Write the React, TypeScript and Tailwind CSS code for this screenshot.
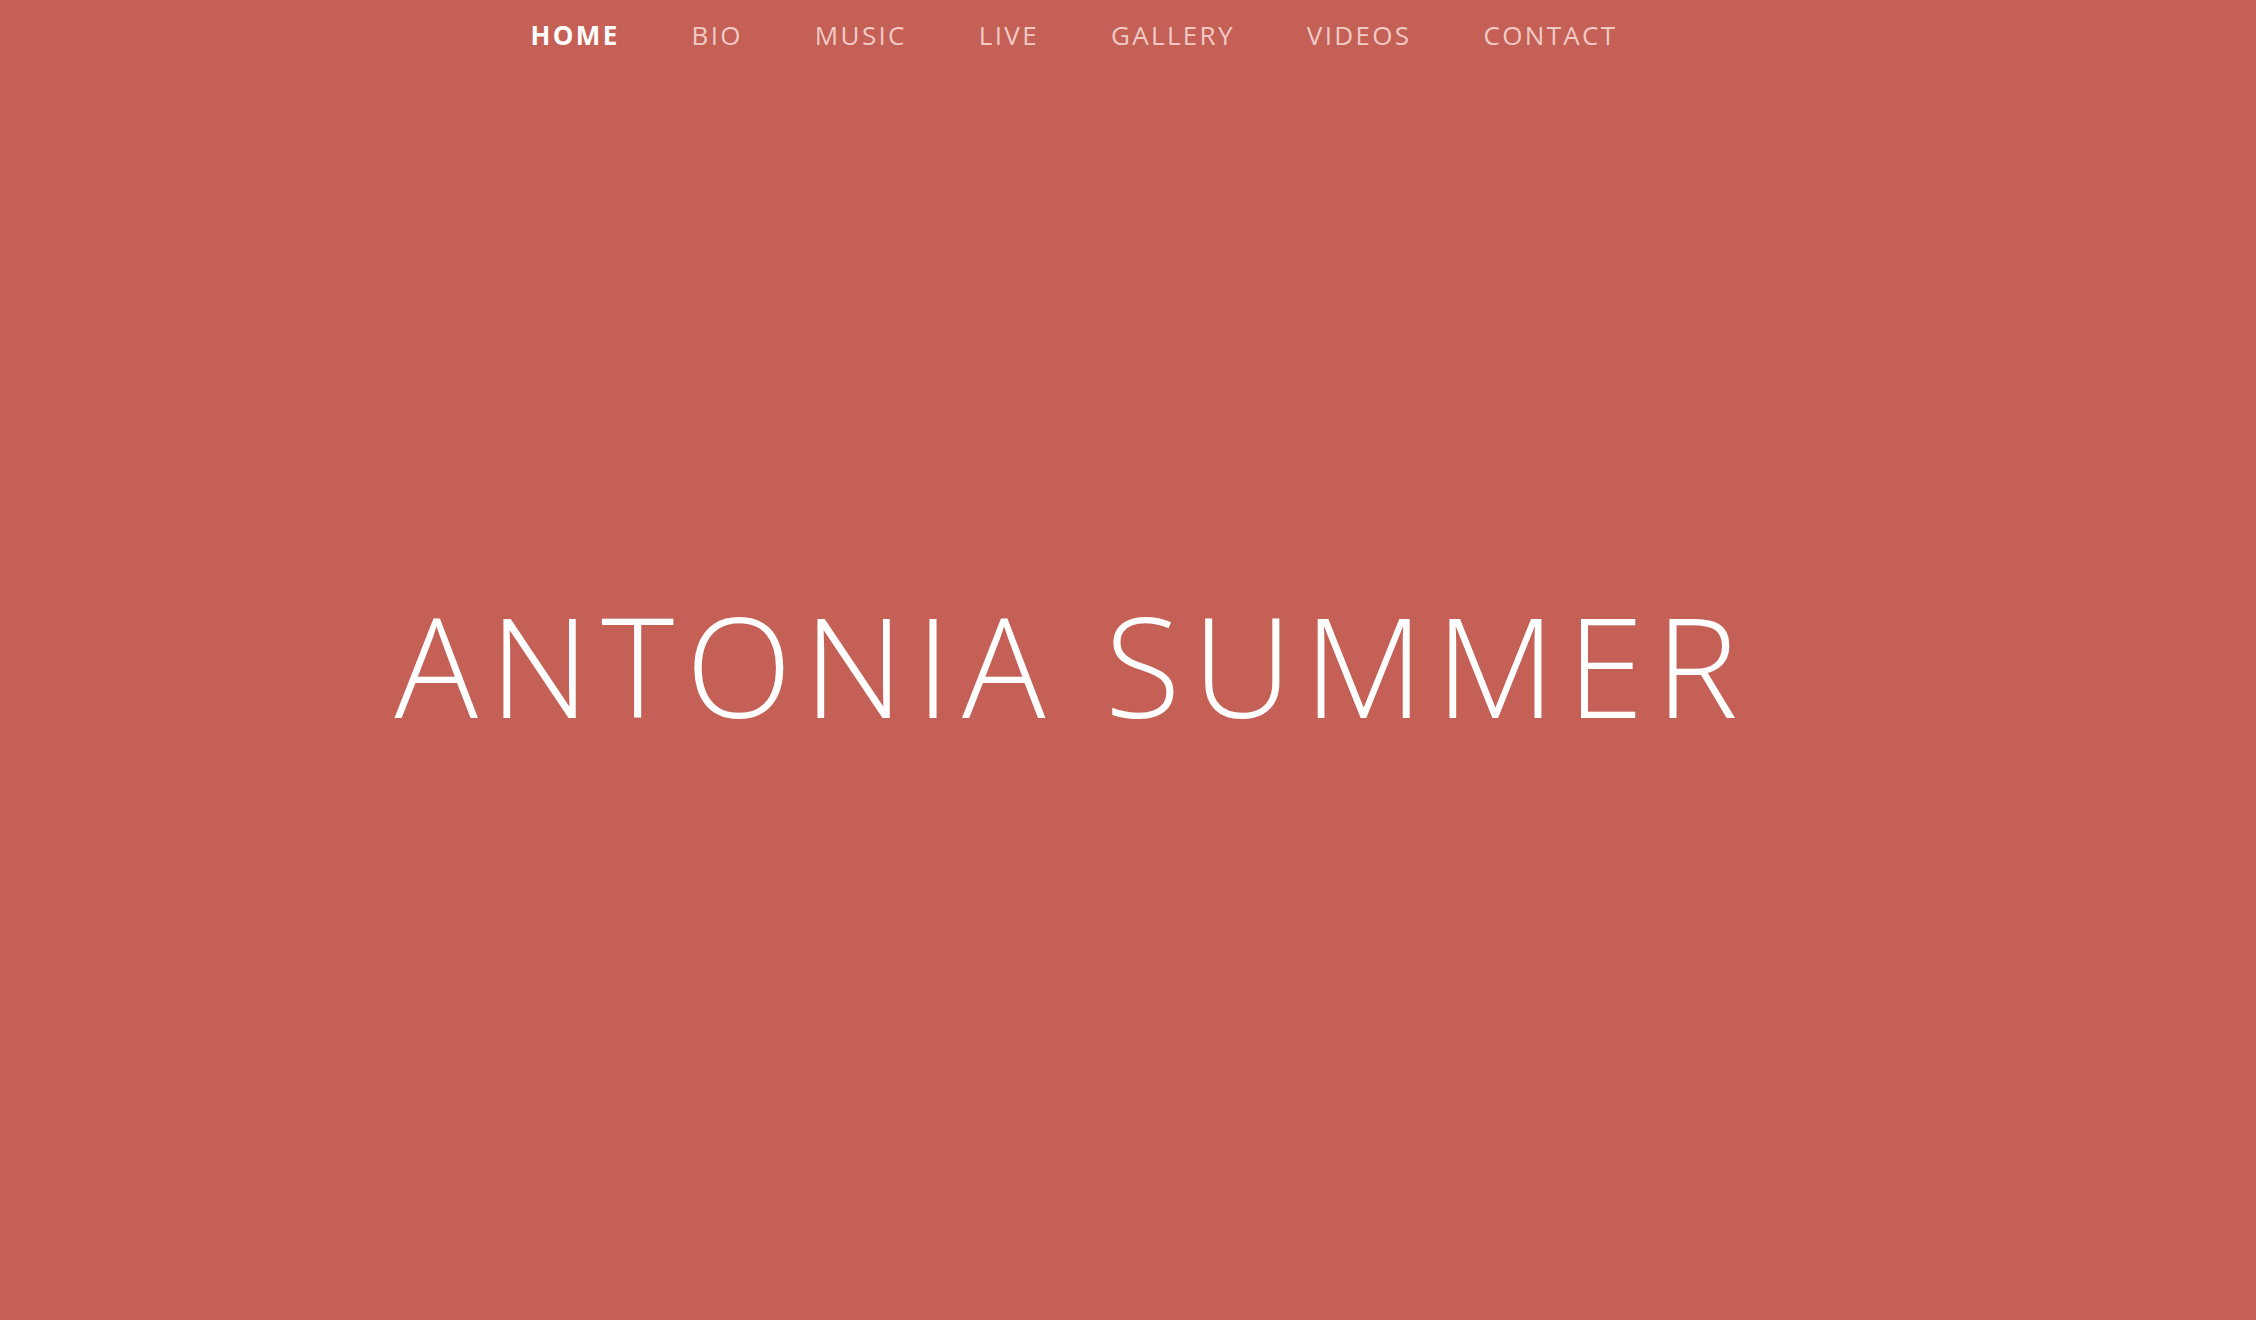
const links = ['HOME', 'BIO', 'MUSIC', 'LIVE', 'GALLERY', 'VIDEOS', 'CONTACT'];

export default function App() {
  return (
    <div className="relative h-screen w-full overflow-hidden bg-[#c46055] font-['Open_Sans',sans-serif]">
      {/* top menu sits over the hero */}
      <nav className="absolute inset-x-0 top-0 flex justify-center gap-[72px] pt-[17px] pr-[108px]">
        {links.map((l, i) => (
          <a
            key={l}
            href="#"
            className={`text-[26px] leading-[36px] tracking-[0.09em] ${
              i === 0 ? 'font-bold text-white' : 'text-[#f1cac6]'
            }`}
          >
            {l}
          </a>
        ))}
      </nav>

      <main className="flex h-full items-center justify-center pt-[8px] pr-[112px]">
        <h1 className="text-[139px] font-light leading-none tracking-[11.6px] text-white">
          ANTONIA SUMMER
        </h1>
      </main>
    </div>
  );
}
